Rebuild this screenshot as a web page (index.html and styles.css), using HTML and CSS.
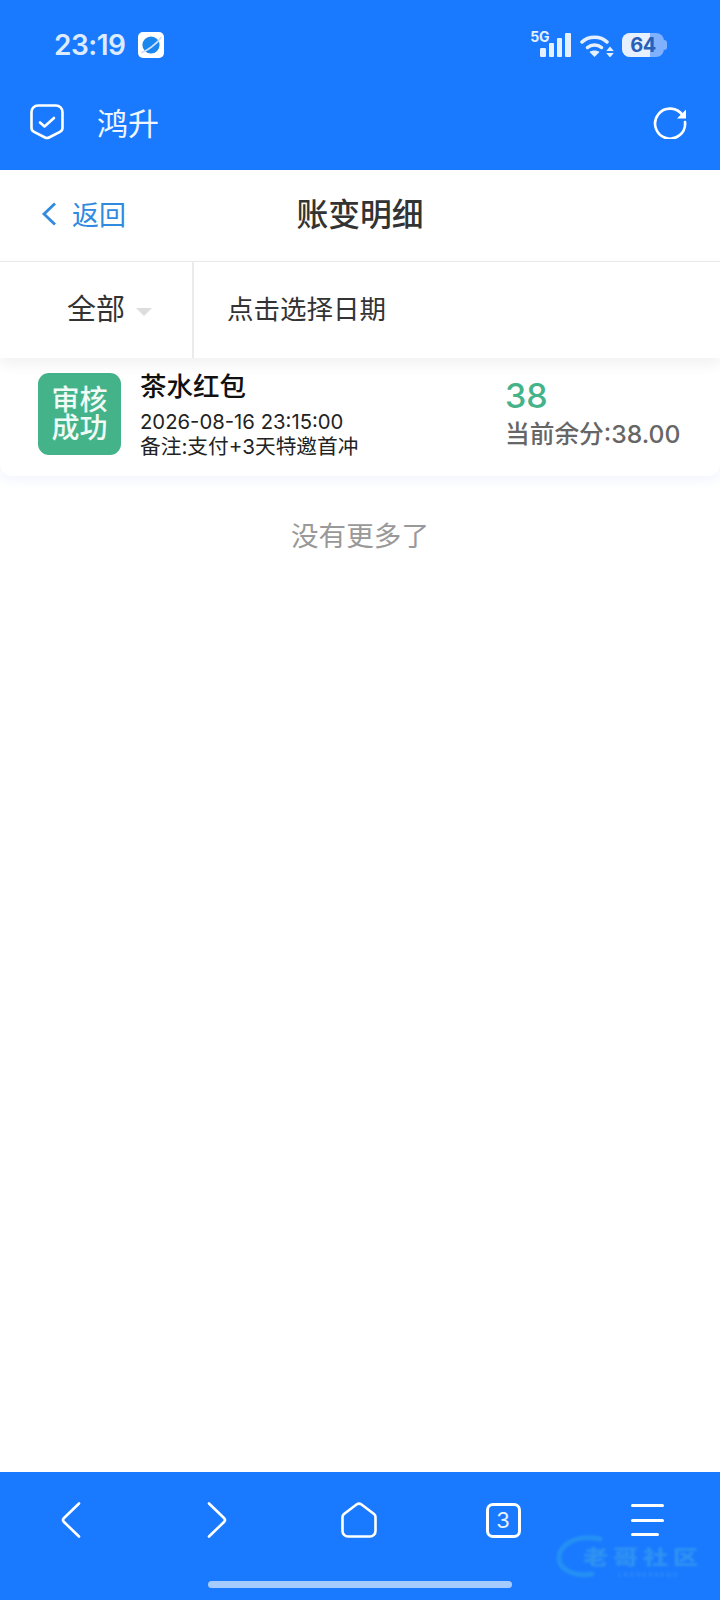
FILE: index.html
```html
<!DOCTYPE html>
<html lang="zh-CN">
<head>
<meta charset="utf-8">
<title>账变明细</title>
<link rel="stylesheet" href="styles.css">
</head>
<body>
<div class="phone">
  <header class="top">
    <div class="status">
      <span class="time">23:19</span>
      <svg class="app-icon" viewBox="0 0 26 26"><rect width="26" height="26" rx="5" fill="#fff"/><circle cx="13" cy="13" r="8.6" fill="#1b86ee"/><path d="M3 20.5C8 19.5 19 12 23.500 5" fill="none" stroke="#cfe0fa" stroke-width="1.600"/></svg>
      <span class="status-gap"></span>
      <span class="five-g">5G</span>
      <svg class="signal" viewBox="0 0 32 24"><g fill="#e4efff"><rect x="0" y="15" width="6" height="9" rx="1.200"/><rect x="9" y="10" width="5" height="14" rx="1"/><rect x="17" y="5" width="5" height="19" rx="1"/><rect x="25" y="0" width="6" height="24" rx="1"/></g></svg>
      <svg class="wifi" viewBox="0 0 34 24"><g fill="none" stroke="#e4efff" stroke-width="3.500" stroke-linecap="round"><path d="M2 9C8.500 2.500 20.500 2.500 27 9"/><path d="M7.500 14.500C11.500 11 17.500 11 21.500 14.500"/></g><path d="M9.500 19C12 17 17 17 19.500 19L14.500 24Z" fill="#e4efff"/><path d="M30 13.500l3.800 4.500h-7.600zM30 24.500l3.800-4.500h-7.600z" fill="#e4efff"/></svg>
      <span class="battery"><span class="battery-fill"></span><span class="battery-num">64</span></span>
    </div>
    <div class="appbar">
      <svg class="shield" viewBox="0 0 34 36"><path d="M8 1.500h18a6.500 6.500 0 0 1 6.500 6.500V24q0 2.500-2.500 3.800L19 33.500q-2 1-4 0L4 27.800q-2.500-1.300-2.500-3.800V8A6.500 6.500 0 0 1 8 1.500Z" fill="none" stroke="#fff" stroke-width="2.600"/><path d="M10 18.500l4.500 4L24 14" fill="none" stroke="#fff" stroke-width="2.600" stroke-linecap="round" stroke-linejoin="round"/></svg>
      <span class="app-title">鸿升</span>
      <svg class="refresh" viewBox="0 0 34 34"><path d="M30 11A15 15 0 1 0 32 17" fill="none" stroke="#fff" stroke-width="2.600" stroke-linecap="round"/><path d="M33 4.500V13.500H24Z" fill="#fff"/></svg>
    </div>
  </header>

  <nav class="nav">
    <a class="back"><svg class="back-icon" viewBox="0 0 16 26"><path d="M14 2.500L3 13l11 10.500" fill="none" stroke="#2f8ae0" stroke-width="2.800"/></svg><span>返回</span></a>
    <h1 class="page-title">账变明细</h1>
  </nav>

  <div class="filters">
    <div class="filter-type"><span>全部</span><i class="caret"></i></div>
    <div class="filter-date">点击选择日期</div>
  </div>

  <div class="record">
    <div class="badge">审核<br>成功</div>
    <div class="record-main">
      <div class="record-name">茶水红包</div>
      <div class="record-date">2026-08-16 23:15:00</div>
      <div class="record-note">备注:支付+3天特邀首冲</div>
    </div>
    <div class="record-side">
      <div class="amount">38</div>
      <div class="balance">当前余分:38.00</div>
    </div>
  </div>

  <div class="no-more">没有更多了</div>

  <footer class="bottom">
    <div class="tools">
      <svg class="tool" viewBox="0 0 36 36"><path d="M26 1.500L11 16q-2 2 0 4l15 14.500" fill="none" stroke="#fff" stroke-width="2.600" stroke-linecap="round"/></svg>
      <svg class="tool" viewBox="0 0 36 36"><path d="M12 1.500L27 16q2 2 0 4L12 34.500" fill="none" stroke="#fff" stroke-width="2.600" stroke-linecap="round"/></svg>
      <svg class="tool" viewBox="0 0 36 36"><path d="M15.500 2.500q2.500-1.800 5 0L33 12q1.500 1.200 1.500 3v14a5.500 5.500 0 0 1-5.500 5.500H7A5.500 5.500 0 0 1 1.500 29V15q0-1.800 1.500-3Z" fill="none" stroke="#fff" stroke-width="2.600"/></svg>
      <div class="tabs-count">3</div>
      <div class="menu"><i></i><i></i><i></i></div>
    </div>
    <div class="home-bar"></div>
    <div class="watermark">
      <svg class="wm-ring" viewBox="0 0 50 44"><path d="M44 4C20-1 3 10 3 23c0 13 18 19 33 16" fill="none" stroke="#2a9af0" stroke-width="5" stroke-linecap="round"/></svg>
      <span class="wm-text">老哥社区</span>
      <span class="wm-sub">LAOGESHEQU</span>
    </div>
  </footer>
</div>
</body>
</html>
```

FILE: styles.css
```css
* { box-sizing: border-box; }
html, body { margin: 0; padding: 0; background: #fff; }
body { font-family: "Noto Sans CJK SC", "Noto Sans", sans-serif; }
.phone { position: relative; width: 720px; height: 1600px; display: flex; flex-direction: column; overflow: hidden; background: #fff; }

.top { height: 170px; background: #1a7aff; color: #fff; display: flex; flex-direction: column; flex: none; }
.status { height: 90px; display: flex; align-items: center; padding: 0 56px 0 54px; }
.time { font-family: Inter, "Noto Sans", sans-serif; font-weight: 600; font-size: 28px; color: #dcebff; letter-spacing: -0.5px; }
.app-icon { width: 26px; height: 26px; margin-left: 13px; }
.status-gap { flex: 1; }
.five-g { font-family: Inter, sans-serif; font-weight: 700; font-size: 14px; line-height: 13px; color: #e4efff; align-self: flex-start; margin-top: 30px; margin-right: -9px; letter-spacing: -0.4px; }
.signal { width: 32px; height: 24px; margin-right: 8px; }
.wifi { width: 34px; height: 24px; margin-right: 8px; }
.battery { position: relative; width: 42px; height: 24px; border-radius: 8px; background: #7fb1ff; display: block; }
.battery::after { content: ""; position: absolute; left: 42px; top: 7px; width: 3px; height: 10px; border-radius: 0 3px 3px 0; background: #7fb1ff; }
.battery-fill { position: absolute; left: 0; top: 0; bottom: 0; width: 28px; border-radius: 8px 0 0 8px; background: #e6f0ff; }
.battery-num { position: absolute; left: 0; right: 0; top: 0; text-align: center; font-family: Inter, sans-serif; font-weight: 700; font-size: 20px; line-height: 24px; color: #2a5fb8; letter-spacing: -0.5px; }

.appbar { height: 80px; display: flex; align-items: center; padding: 0 33px 0 30px; margin-top: -8px; }
.shield { width: 34px; height: 36px; }
.app-title { font-size: 31px; font-weight: 400; margin: 0 0 2px 33px; color: #f0f6ff; flex: 1; line-height: 1; }
.refresh { width: 34px; height: 34px; }

.nav { position: relative; height: 92px; display: flex; align-items: center; justify-content: center; padding-bottom: 6px; border-bottom: 1px solid #ebebeb; flex: none; }
.back { position: absolute; left: 41px; top: 0; bottom: 4px; display: flex; align-items: center; color: #2f8ae0; font-size: 27px; }
.back-icon { width: 16px; height: 26px; margin-right: 15px; }
.page-title { margin: 0; font-size: 31.800px; font-weight: 500; color: #333; line-height: 1; }

.filters { position: relative; z-index: 1; height: 96px; display: flex; flex: none; background: #fff; box-shadow: 0 6px 14px rgba(0,0,0,.06); }
.filter-type { width: 194px; border-right: 2px solid #ebebeb; display: flex; align-items: center; padding: 0 0 6px 67px; font-size: 29px; color: #333; }
.caret { width: 0; height: 0; margin-left: 11px; margin-top: 9px; border-left: 8px solid transparent; border-right: 8px solid transparent; border-top: 8px solid #ddd; }
.filter-date { display: flex; align-items: center; padding: 0 0 5px 33px; font-size: 26.500px; color: #333; }

.record { height: 118px; flex: none; display: flex; border-radius: 0 0 12px 12px; background: #fff; box-shadow: 0 4px 12px rgba(60,100,220,.07); padding: 15px 0 0 38px; }
.badge { width: 83px; height: 82px; border-radius: 11px; background: #44b38a; color: #f1fbf6; font-size: 28px; line-height: 28px; text-align: center; padding-top: 11px; font-weight: 500; flex: none; }
.record-main { margin-left: 19px; width: 365px; flex: none; }
.record-name { font-size: 26.500px; font-weight: 500; color: #111; line-height: 30px; margin-top: -3px; }
.record-date { font-family: Inter, "Noto Sans CJK SC", sans-serif; font-size: 20.300px; color: #222; line-height: 26px; margin-top: 9px; }
.record-note { font-family: Inter, "Noto Sans CJK SC", sans-serif; font-size: 20.700px; color: #222; line-height: 24px; }
.record-side { flex: 1; }
.amount { font-family: Inter, sans-serif; font-size: 34px; font-weight: 500; color: #44b38a; line-height: 38px; margin-top: 4px; }
.balance { font-family: Inter, "Noto Sans CJK SC", sans-serif; font-size: 24.700px; color: #666; font-weight: 500; line-height: 38px; }

.no-more { margin-top: 38px; text-align: center; font-size: 27.600px; color: #999; line-height: 40px; }

.bottom { position: absolute; left: 0; right: 0; bottom: 0; height: 128px; background: #1a7aff; }
.tools { display: grid; grid-template-columns: repeat(5, 144px); justify-items: center; align-items: center; padding-top: 30px; margin-left: -1px; }
.tool { width: 36px; height: 36px; }
.tabs-count { width: 35px; height: 35px; border: 3px solid #fff; border-radius: 7px; color: #e8f1ff; font-family: Inter, sans-serif; font-size: 22px; line-height: 29px; text-align: center; }
.menu { width: 33px; height: 32px; display: flex; flex-direction: column; justify-content: space-between; }
.menu i { display: block; height: 3px; background: #fff; border-radius: 1.500px; }
.menu i:last-child { width: 28px; }
.home-bar { position: absolute; left: 208px; width: 304px; bottom: 12px; height: 7px; border-radius: 4px; background: #a6ccff; }
.watermark { position: absolute; left: 556px; top: 63px; width: 150px; height: 46px; filter: blur(1px); }
.wm-ring { position: absolute; left: 0; top: 0; width: 50px; height: 44px; opacity: .7; }
.wm-text { position: absolute; left: 27px; top: 7px; font-size: 20px; font-weight: 900; color: #2f92f2; line-height: 29px; white-space: nowrap; letter-spacing: 4px; transform: scaleX(1.25); transform-origin: left center; }
.wm-sub { position: absolute; left: 62px; top: 36px; font-family: Inter, sans-serif; font-size: 6px; font-weight: 700; color: #2f8df3; line-height: 7px; letter-spacing: 2px; white-space: nowrap; }
```
